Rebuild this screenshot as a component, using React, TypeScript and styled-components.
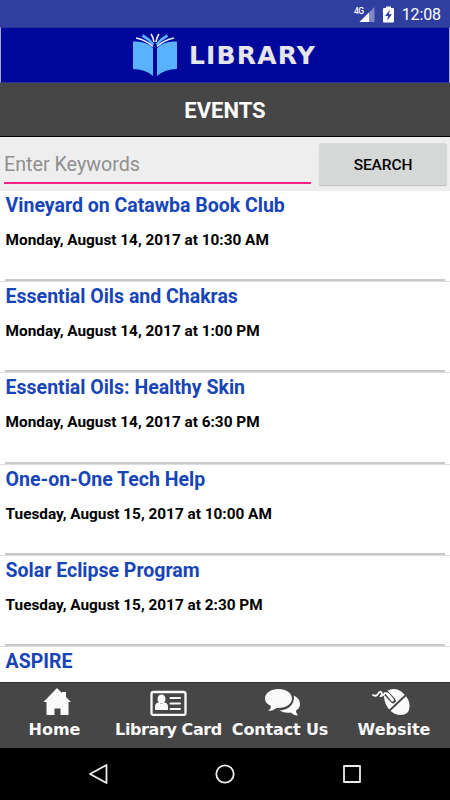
import React from "react";
import styled, { createGlobalStyle } from "styled-components";

const GlobalStyle = createGlobalStyle`
  * { box-sizing: border-box; }
  body { margin: 0; background: #000; font-family: Roboto, "Noto Sans", sans-serif; }
`;

const Screen = styled.div`
  width: 450px;
  height: 800px;
  display: flex;
  flex-direction: column;
  overflow: hidden;
  background: #fff;
`;

const StatusBar = styled.div`
  flex: none;
  height: 27px;
  display: flex;
  align-items: center;
  justify-content: flex-end;
  gap: 8px;
  padding: 2px 9px 0 0;
  background: #303f9f;
  color: #fff;
`;

const Clock = styled.span`
  font-size: 16px;
  line-height: 20px;
  letter-spacing: -0.1px;
`;

const NetworkLabel = styled.span`
  font-size: 8.5px;
  font-weight: 500;
  line-height: 8px;
  letter-spacing: -0.5px;
  margin: -8px -13px 0 0;
  z-index: 1;
`;

const Banner = styled.div`
  flex: none;
  height: 56px;
  display: flex;
  align-items: center;
  padding-left: 132px;
  background: #00089c;
  border: 1px solid #27329a;
  border-left-color: #a4a8c8;
  border-right-color: #a4a8c8;
`;

const BrandName = styled.span`
  margin: 2px 0 0 11px;
  color: #e4e4ea;
  font: bold 25px/30px "DejaVu Sans", sans-serif;
  letter-spacing: 1.15px;
`;

const PageTitle = styled.h1`
  flex: none;
  margin: 0;
  height: 54px;
  border-bottom: 1px solid #000;
  background: #464646;
  color: #fff;
  font-size: 22px;
  font-weight: 700;
  line-height: 56px;
  text-align: center;
`;

const SearchBar = styled.div`
  flex: none;
  height: 54px;
  display: flex;
  align-items: flex-start;
  padding: 6px 3px 0 4px;
  background: #eee;
`;

const KeywordField = styled.input`
  width: 307px;
  height: 41px;
  padding: 3px 0 0;
  border: 0;
  border-bottom: 2px solid #ff2483;
  border-radius: 0;
  outline: 0;
  background: transparent;
  font: 19.7px Roboto, sans-serif;
  &::placeholder { color: #8f8f8f; opacity: 1; }
`;

const SearchButton = styled.button`
  width: 128px;
  height: 42px;
  margin-left: 8px;
  padding: 1px 0 0;
  border: 0;
  border-radius: 2px;
  background: #d6d7d7;
  box-shadow: 0 1px 1px #bbb;
  color: #000;
  font: 500 15.5px Roboto, sans-serif;
  letter-spacing: -0.1px;
`;

const EventList = styled.ul`
  flex: none;
  height: 491px;
  margin: 0;
  padding: 0;
  overflow: hidden;
  list-style: none;
`;

const EventItem = styled.li`
  height: 91.2px;
  display: flex;
  flex-direction: column;
  padding: 2px 5px 0;
  border-bottom: 1px solid #dedede;
`;

const EventName = styled.h2`
  margin: 0 0 0 0.6px;
  color: #1745b8;
  font-size: 19.5px;
  font-weight: 700;
  line-height: 25px;
  white-space: nowrap;
`;

const EventDate = styled.p`
  flex: 1;
  margin: 0;
  padding: 12px 0 0 0.6px;
  border-bottom: 2px solid #c9c9c9;
  color: #000;
  font-size: 15.35px;
  font-weight: 700;
  line-height: 20px;
  white-space: nowrap;
`;

const TabBar = styled.nav`
  flex: none;
  height: 66px;
  display: grid;
  grid-template-columns: 109px 119px 104px 118px;
  border-top: 1px solid #303030;
  background: #464646;
`;

const Tab = styled.a<{ $shift?: number; $inset?: number }>`
  display: flex;
  flex-direction: column;
  align-items: center;
  padding: 5px 0 0 ${(p) => p.$inset ?? 0}px;
  color: #fafafa;
  font: bold 16px/20px "DejaVu Sans", sans-serif;
  white-space: nowrap;
  svg { flex: none; margin-left: ${(p) => p.$shift ?? 0}px; }
`;

const TabLabel = styled.span<{ $spacing?: number }>`
  margin-top: 4px;
  letter-spacing: ${(p) => p.$spacing ?? 0}px;
`;

const SystemNav = styled.div`
  flex: none;
  height: 52px;
  display: flex;
  align-items: center;
  justify-content: space-between;
  padding: 0 87px;
  background: #000;
`;

const SignalIcon = () => (
  <svg width="16" height="16" viewBox="0 0 16 16">
    <path d="M15.5 0V15H.5Z" fill="#8189c4" />
    <path d="M10 5.5V15H.5Z" fill="#fff" />
  </svg>
);

const BatteryIcon = () => (
  <svg width="11" height="17" viewBox="0 0 11 17">
    <path d="M3 .5h5V2h2q1 0 1 1v12.5q0 1-1 1H1q-1 0-1-1V3q0-1 1-1h2Z" fill="#fff" />
    <path d="M6.8 4 2 10h3L4.3 14.5 9 8.3H6Z" fill="#303f9f" />
  </svg>
);

const BookLogo = () => (
  <svg width="45" height="44" viewBox="0 0 45 44">
    <path d="M0 8.5Q13 7.500 20 15V43Q12 36 0 36Z M44 8.500Q31 7.500 24 15V43Q32 36 44 36Z" fill="#59b2fb" />
    <g fill="none">
      <path d="M20 13.500Q13 7 3 5M24 13.500Q31 7 41 5" stroke="#e5effc" strokeWidth="1.7" />
      <path d="M20.500 11.500Q16 6 9.500 2.500M23.500 11.500Q28 6 34.500 2.500" stroke="#59b2fb" strokeWidth="2.600" />
      <path d="M21 9Q20.500 4.500 18 1M23 9Q23.500 4.500 26 1" stroke="#f1f4ff" strokeWidth="1.6" />
    </g>
  </svg>
);

const HomeIcon = () => (
  <svg width="28" height="28" viewBox="0 0 28 28" fill="currentColor">
    <path d="M14 0 .5 14h3v13h8v-6.5h6V27h8V14h2.5l-5-5V4h-4v1Z" />
  </svg>
);

const CardIcon = () => (
  <svg width="37" height="28" viewBox="0 0 37 28">
    <rect x="1.5" y="4" width="34" height="23" rx="2" fill="none" stroke="currentColor" strokeWidth="2.3" />
    <ellipse cx="11.5" cy="11" rx="4" ry="4.5" fill="currentColor" />
    <path d="M5 22v-3q0-4.5 4-4.5l2.5 1.5 2.5-1.5q4 0 4 4.5v3Z" fill="currentColor" />
    <path d="M20.5 10H30M20.5 15.5H30M20.5 21H30" stroke="currentColor" strokeWidth="2" strokeLinecap="round" />
  </svg>
);

const ChatIcon = () => (
  <svg width="36" height="28" viewBox="0 0 36 28" fill="currentColor">
    <path d="M29 7.5q6 3 6 8.5 0 4-4 6.5 0 3 2 5-5-.5-7.5-3-6 1-11-2Q29.5 21 29 7.5Z" />
    <path d="M13.5 1C21 1 27 5 27 10.5S21 20 13.5 20h-2Q8 23 3 23q3-2 3-5Q0 15.5 0 10.5C0 5 6 1 13.5 1Z" />
  </svg>
);

const MouseIcon = () => (
  <svg width="38" height="28" viewBox="0 0 38 28">
    <path d="M12 9Q12 4 17 2q8-3 15 4 6 6 5.500 13-.5 8-9 8-6 0-11-5-5-6-5.500-13Z" fill="currentColor" />
    <path d="M15.500 24.500 35 6" fill="none" stroke="#464646" strokeWidth="1.8" />
    <path d="m15 6 6 6.500" stroke="#464646" strokeWidth="5.500" strokeLinecap="round" />
    <path d="M1 7q3 2 5-1t3-2q2 1 0 4 2 0 4-3l2 .5" fill="none" stroke="currentColor" strokeWidth="1.8" strokeLinecap="round" />
    <path d="m15.500 6 5 6" stroke="currentColor" strokeWidth="3" strokeLinecap="round" />
  </svg>
);

const events = [
  { name: "Vineyard on Catawba Book Club", date: "Monday, August 14, 2017 at 10:30 AM" },
  { name: "Essential Oils and Chakras", date: "Monday, August 14, 2017 at 1:00 PM" },
  { name: "Essential Oils: Healthy Skin", date: "Monday, August 14, 2017 at 6:30 PM" },
  { name: "One-on-One Tech Help", date: "Tuesday, August 15, 2017 at 10:00 AM" },
  { name: "Solar Eclipse Program", date: "Tuesday, August 15, 2017 at 2:30 PM" },
  { name: "ASPIRE", date: "" },
];

export default function App() {
  return (
    <>
      <GlobalStyle />
      <Screen>
        <StatusBar>
          <NetworkLabel>4G</NetworkLabel>
          <SignalIcon />
          <BatteryIcon />
          <Clock>12:08</Clock>
        </StatusBar>
        <Banner>
          <BookLogo />
          <BrandName>LIBRARY</BrandName>
        </Banner>
        <PageTitle>EVENTS</PageTitle>
        <SearchBar>
          <KeywordField placeholder="Enter Keywords" />
          <SearchButton>SEARCH</SearchButton>
        </SearchBar>
        <EventList>
          {events.map((e) => (
            <EventItem key={e.name}>
              <EventName>{e.name}</EventName>
              <EventDate>{e.date}</EventDate>
            </EventItem>
          ))}
        </EventList>
        <TabBar>
          <Tab $shift={5}><HomeIcon /><TabLabel>Home</TabLabel></Tab>
          <Tab><CardIcon /><TabLabel $spacing={-0.4}>Library Card</TabLabel></Tab>
          <Tab $shift={5}><ChatIcon /><TabLabel $spacing={-0.15}>Contact Us</TabLabel></Tab>
          <Tab $inset={6} $shift={-7}><MouseIcon /><TabLabel>Website</TabLabel></Tab>
        </TabBar>
        <SystemNav>
          <svg width="22" height="22" viewBox="0 0 22 22">
            <path d="M19.5 2v18L3 11Z" fill="none" stroke="#eee" strokeWidth="1.8" strokeLinejoin="round" />
          </svg>
          <svg width="22" height="22" viewBox="0 0 22 22">
            <circle cx="11" cy="11" r="8.7" fill="none" stroke="#eee" strokeWidth="1.8" />
          </svg>
          <svg width="22" height="22" viewBox="0 0 22 22">
            <rect x="3" y="3" width="16" height="16" fill="none" stroke="#eee" strokeWidth="1.8" strokeLinejoin="round" />
          </svg>
        </SystemNav>
      </Screen>
    </>
  );
}
